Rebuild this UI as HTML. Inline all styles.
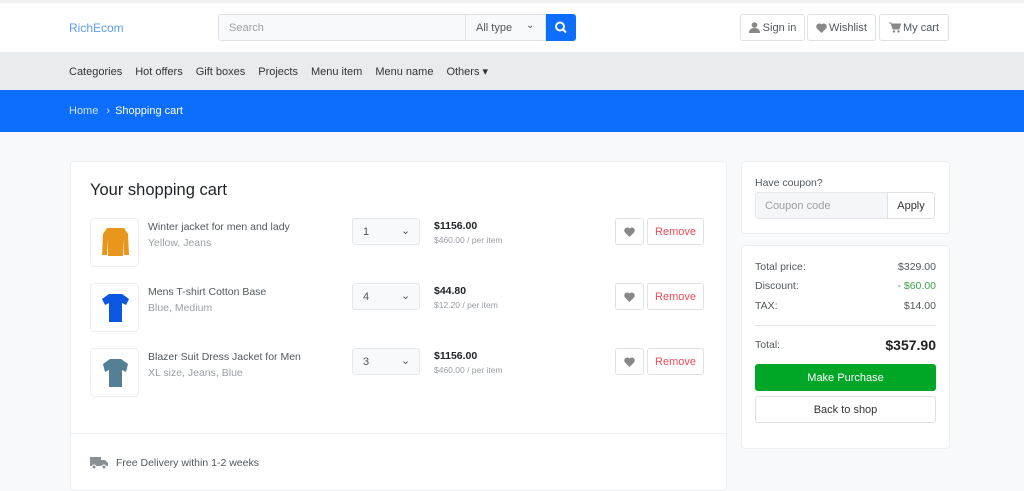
<!DOCTYPE html><html><head><style>
*{box-sizing:border-box;margin:0;padding:0}
body{width:1024px;height:475px;overflow:hidden;background:#f8f9fa;font-family:"Liberation Sans",sans-serif;font-size:11px;color:#212529;position:relative}
.a{position:absolute}
.top{top:0;left:0;width:1024px;height:3px;background:#f1f1f1}
.hdr{top:3px;left:0;width:1024px;height:49px;background:#fff}
.nav{top:52px;left:0;width:1024px;height:38px;background:#e9ecef}
.bc{top:90px;left:0;width:1024px;height:42px;background:#0d6efd}
.btn{border:1px solid #dee2e6;border-radius:3px;background:#fff;display:flex;align-items:center;justify-content:center;color:#51585e}
.card{background:#fff;border:1px solid #eceef0;border-radius:4px}
.sel{background:#f8f9fa;border:1px solid #e5e7ea;border-radius:3px;color:#555;padding-left:10px;display:flex;align-items:center}
.t{color:#51585e;font-size:10.5px}
.g{color:#9a9fa5;font-size:10.5px}
.fx{display:flex;align-items:center}
</style></head><body>
<div class="a top"></div>
<div class="a hdr"></div>
<div class="a" style="left:69px;top:21px;color:#5c9ef8;font-size:12px">RichEcom</div>
<div class="a fx" style="left:218px;top:14px;width:248px;height:27px;background:#f8f9fa;border:1px solid #dee2e6;border-radius:3px 0 0 3px;padding:0 10px;color:#9aa0a6">Search</div>
<div class="a fx" style="left:465px;top:14px;width:81px;height:27px;background:#f8f9fa;border:1px solid #dee2e6;padding:0 10px;color:#555">All type <span style="position:absolute;left:60px;top:5px;font-size:10px">⌄</span></div>
<div class="a" style="left:546px;top:14px;width:30px;height:27px;background:#0d6efd;border-radius:0 3px 3px 0"><svg width="30" height="27"><circle cx="14" cy="12.5" r="4" fill="none" stroke="#fff" stroke-width="2"/><line x1="17" y1="15.5" x2="20" y2="18.5" stroke="#fff" stroke-width="2"/></svg></div>
<div class="a btn" style="left:740px;top:14px;width:65px;height:27px"><svg width="11" height="11" style="margin-right:3px"><circle cx="5.5" cy="3" r="2.8" fill="#888"/><path d="M0 11 Q0 6 5.5 6 Q11 6 11 11Z" fill="#888"/></svg>Sign in</div>
<div class="a btn" style="left:807px;top:14px;width:69px;height:27px"><svg width="11" height="10" style="margin-right:2px"><path d="M5.5 10 L1 5.5 A2.7 2.7 0 0 1 5.5 1.5 A2.7 2.7 0 0 1 10 5.5Z" fill="#888"/></svg>Wishlist</div>
<div class="a btn" style="left:879px;top:14px;width:70px;height:27px"><svg width="12" height="11" style="margin-right:2px"><path d="M0 1h2l2 6h6l1.5-5H3" fill="#888" stroke="#888"/><circle cx="5" cy="9.5" r="1.2" fill="#888"/><circle cx="9.5" cy="9.5" r="1.2" fill="#888"/></svg>My cart</div>
<div class="a nav"></div>
<div class="a" style="left:69px;top:65px;color:#333;font-size:11px">Categories<span style="margin-left:13px">Hot offers</span><span style="margin-left:13px">Gift boxes</span><span style="margin-left:13px">Projects</span><span style="margin-left:13px">Menu item</span><span style="margin-left:13px">Menu name</span><span style="margin-left:13px">Others ▾</span></div>
<div class="a bc"></div>
<div class="a" style="left:69px;top:105px;color:#cfe2ff">Home <span style="margin:0 5px">›</span><span style="color:#fff">Shopping cart</span></div>
<div class="a card" style="left:70px;top:161px;width:657px;height:330px"></div>
<div class="a" style="left:70px;top:433px;width:657px;height:1px;background:#eceef0"></div>
<div class="a" style="left:90px;top:181px;font-size:16.5px;color:#212529">Your shopping cart</div>

<div class="a card" style="left:90px;top:218px;width:49px;height:49px"><svg width="49" height="49"><path d="M16 9h17l4 6 1 21h-5l-1-16v17h-15v-17l-1 16h-5l1-21z" fill="#e8961c"/></svg></div>
<div class="a t" style="left:148px;top:221px">Winter jacket for men and lady</div>
<div class="a g" style="left:148px;top:237px">Yellow, Jeans</div>
<div class="a sel" style="left:352px;top:218px;width:68px;height:27px">1<span style="position:absolute;left:48px;top:5px">⌄</span></div>
<div class="a" style="left:434px;top:220px;font-weight:bold;font-size:10.5px">$1156.00</div>
<div class="a g" style="left:434px;top:235px;font-size:8.5px">$460.00 / per item</div>
<div class="a btn" style="left:615px;top:218px;width:29px;height:27px"><svg width="11" height="10"><path d="M5.5 10 L1 5.5 A2.7 2.7 0 0 1 5.5 1.5 A2.7 2.7 0 0 1 10 5.5Z" fill="#888"/></svg></div>
<div class="a btn" style="left:647px;top:218px;width:57px;height:27px;color:#ee4a5b">Remove</div>

<div class="a card" style="left:90px;top:283px;width:49px;height:49px"><svg width="49" height="49"><path d="M18 10h13l7 5-3 6-4-2v19h-13v-19l-4 2-3-6z" fill="#0b57e0"/></svg></div>
<div class="a t" style="left:148px;top:286px">Mens T-shirt Cotton Base</div>
<div class="a g" style="left:148px;top:302px">Blue, Medium</div>
<div class="a sel" style="left:352px;top:283px;width:68px;height:27px">4<span style="position:absolute;left:48px;top:5px">⌄</span></div>
<div class="a" style="left:434px;top:285px;font-weight:bold;font-size:10.5px">$44.80</div>
<div class="a g" style="left:434px;top:300px;font-size:8.5px">$12.20 / per item</div>
<div class="a btn" style="left:615px;top:283px;width:29px;height:27px"><svg width="11" height="10"><path d="M5.5 10 L1 5.5 A2.7 2.7 0 0 1 5.5 1.5 A2.7 2.7 0 0 1 10 5.5Z" fill="#888"/></svg></div>
<div class="a btn" style="left:647px;top:283px;width:57px;height:27px;color:#ee4a5b">Remove</div>

<div class="a card" style="left:90px;top:348px;width:49px;height:49px"><svg width="49" height="49"><path d="M19 10h11l7 5-2 8-4-2v17h-13v-17l-4 2-2-8z" fill="#557f94"/></svg></div>
<div class="a t" style="left:148px;top:351px">Blazer Suit Dress Jacket for Men</div>
<div class="a g" style="left:148px;top:367px">XL size, Jeans, Blue</div>
<div class="a sel" style="left:352px;top:348px;width:68px;height:27px">3<span style="position:absolute;left:48px;top:5px">⌄</span></div>
<div class="a" style="left:434px;top:350px;font-weight:bold;font-size:10.5px">$1156.00</div>
<div class="a g" style="left:434px;top:365px;font-size:8.5px">$460.00 / per item</div>
<div class="a btn" style="left:615px;top:348px;width:29px;height:27px"><svg width="11" height="10"><path d="M5.5 10 L1 5.5 A2.7 2.7 0 0 1 5.5 1.5 A2.7 2.7 0 0 1 10 5.5Z" fill="#888"/></svg></div>
<div class="a btn" style="left:647px;top:348px;width:57px;height:27px;color:#ee4a5b">Remove</div>

<div class="a" style="left:90px;top:456px"><svg width="18" height="13"><rect x="0" y="1" width="11" height="9" fill="#8a9096"/><path d="M11 4h4l3 3v3h-7z" fill="#8a9096"/><circle cx="4" cy="11" r="2" fill="#8a9096" stroke="#fff"/><circle cx="14" cy="11" r="2" fill="#8a9096" stroke="#fff"/></svg></div>
<div class="a t" style="left:116px;top:457px">Free Delivery within 1-2 weeks</div>

<div class="a card" style="left:741px;top:161px;width:209px;height:73px"></div>
<div class="a t" style="left:755px;top:177px">Have coupon?</div>
<div class="a fx" style="left:755px;top:192px;width:133px;height:27px;background:#f5f6f7;border:1px solid #e5e7ea;border-radius:3px 0 0 3px;padding:0 9px;color:#9aa0a6">Coupon code</div>
<div class="a btn" style="left:887px;top:192px;width:48px;height:27px;border-radius:0 3px 3px 0;color:#333">Apply</div>

<div class="a card" style="left:741px;top:245px;width:209px;height:204px"></div>
<div class="a t" style="left:755px;top:261px">Total price:</div><div class="a t" style="right:88px;top:261px">$329.00</div>
<div class="a t" style="left:755px;top:280px">Discount:</div><div class="a t" style="right:88px;top:280px;color:#3aa64a">- $60.00</div>
<div class="a t" style="left:755px;top:300px">TAX:</div><div class="a t" style="right:88px;top:300px">$14.00</div>
<div class="a" style="left:755px;top:325px;width:181px;height:1px;background:#e3e5e8"></div>
<div class="a t" style="left:755px;top:339px">Total:</div><div class="a" style="right:88px;top:337px;font-size:14px;font-weight:bold;color:#222">$357.90</div>
<div class="a" style="left:755px;top:364px;width:181px;height:27px;background:#00a626;border-radius:3px;color:#fff;display:flex;align-items:center;justify-content:center">Make Purchase</div>
<div class="a btn" style="left:755px;top:396px;width:181px;height:27px;color:#333">Back to shop</div>
</body></html>
